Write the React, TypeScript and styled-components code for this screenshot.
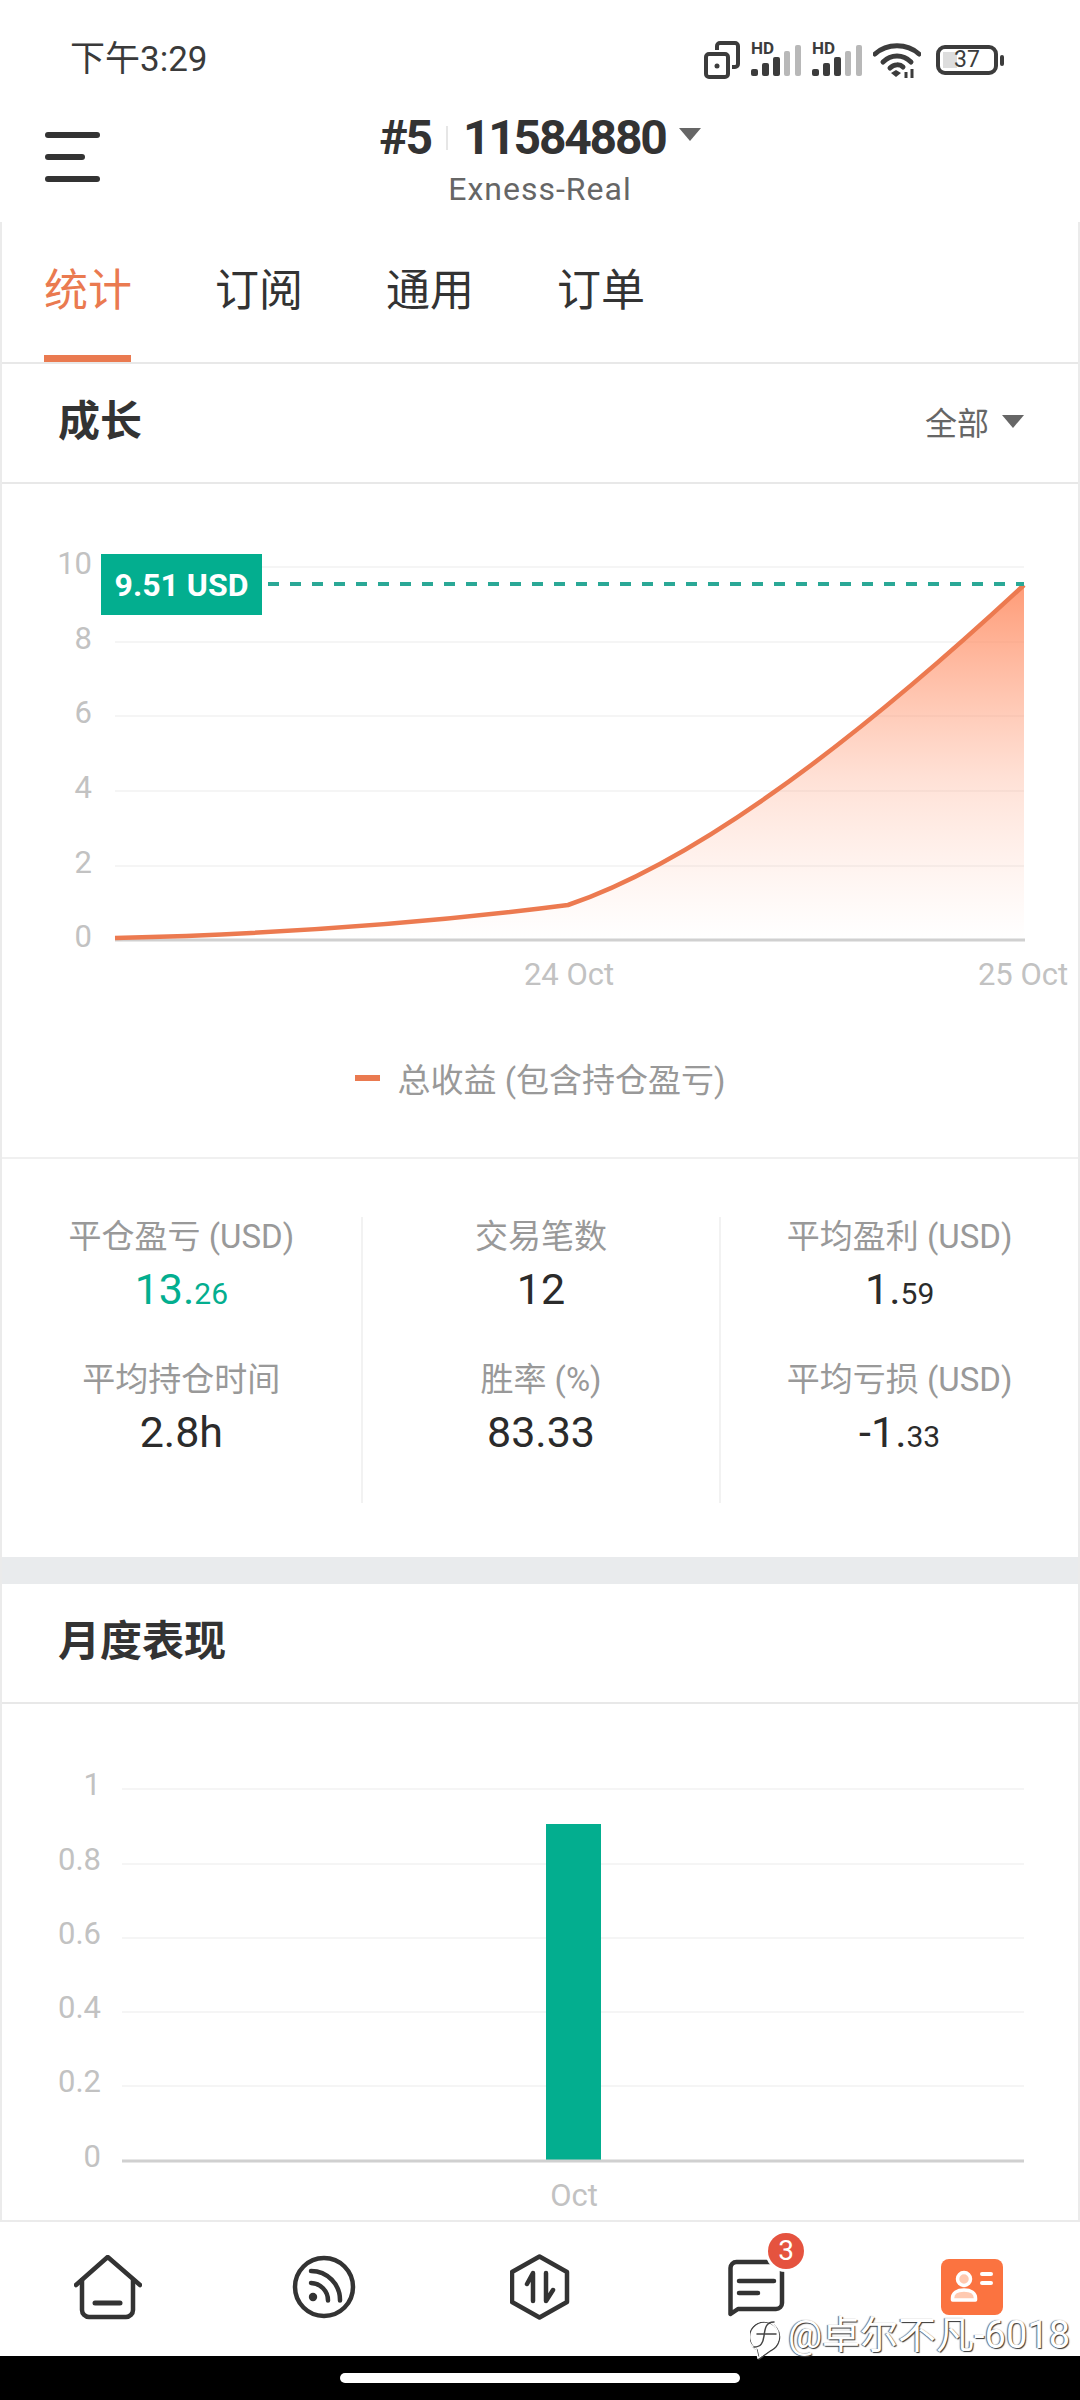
import React from 'react';
import styled, { createGlobalStyle } from 'styled-components';

const GlobalStyle = createGlobalStyle`
  html, body {
    margin: 0;
    padding: 0;
    background: #fff;
  }
  * {
    box-sizing: border-box;
  }
`;

const GREEN = '#03ae8f';
const ORANGE = '#ea7a50';
const FONT = `Roboto, "Noto Sans CJK SC", sans-serif`;

const tabs = ['统计', '订阅', '通用', '订单'];

type Stat = { label: string; value: string; small?: string; green?: boolean };
const stats: Stat[] = [
  { label: '平仓盈亏 (USD)', value: '13.', small: '26', green: true },
  { label: '交易笔数', value: '12' },
  { label: '平均盈利 (USD)', value: '1.', small: '59' },
  { label: '平均持仓时间', value: '2.8h' },
  { label: '胜率 (%)', value: '83.33' },
  { label: '平均亏损 (USD)', value: '-1.', small: '33' },
];

const growthTicks = [
  { label: '10', y: 567 },
  { label: '8', y: 642 },
  { label: '6', y: 716 },
  { label: '4', y: 791 },
  { label: '2', y: 866 },
];

const monthTicks = [
  { label: '1', y: 1789 },
  { label: '0.8', y: 1864 },
  { label: '0.6', y: 1938 },
  { label: '0.4', y: 2012 },
  { label: '0.2', y: 2086 },
];

const linePath = 'M115 938 Q360 932 568 905 Q744 845 1024 585';

const GrowthChart: React.FC = () => (
  <ChartSvg viewBox="2 484 1076 550" width={1076} height={550}>
    <defs>
      <linearGradient id="areaFill" x1="0" y1="585" x2="0" y2="940" gradientUnits="userSpaceOnUse">
        <stop offset="0" stopColor="#ff8a5f" stopOpacity="0.85" />
        <stop offset="0.55" stopColor="#ff9c78" stopOpacity="0.3" />
        <stop offset="1" stopColor="#ffb59a" stopOpacity="0" />
      </linearGradient>
    </defs>
    {growthTicks.map((t) => (
      <g key={t.label}>
        <line x1={115} x2={1024} y1={t.y} y2={t.y} stroke="#f5f5f5" strokeWidth="2" />
        <AxisText x={92} y={t.y + 7} textAnchor="end">{t.label}</AxisText>
      </g>
    ))}
    <AxisText x={92} y={947} textAnchor="end">0</AxisText>
    <path d={`${linePath} L1024 940 L115 940 Z`} fill="url(#areaFill)" />
    <line x1={115} x2={1025} y1={940} y2={940} stroke="#d0d0d0" strokeWidth="3" />
    <path d={linePath} fill="none" stroke="#ec7a50" strokeWidth="4.5" strokeLinejoin="round" />
    <line x1={268} x2={1024} y1={584} y2={584} stroke="#2aa896" strokeWidth="4" strokeDasharray="11 11" />
    <rect x={101} y={554} width={161} height={61} fill={GREEN} />
    <TagText x={181.5} y={596} textAnchor="middle">9.51 USD</TagText>
    <AxisText x={569} y={985} textAnchor="middle">24 Oct</AxisText>
    <AxisText x={1023} y={985} textAnchor="middle">25 Oct</AxisText>
  </ChartSvg>
);

const MonthChart: React.FC = () => (
  <ChartSvg viewBox="2 1704 1076 516" width={1076} height={516}>
    {monthTicks.map((t) => (
      <g key={t.label}>
        <line x1={122} x2={1024} y1={t.y} y2={t.y} stroke="#f5f5f5" strokeWidth="2" />
        <AxisText x={101} y={t.y + 6} textAnchor="end">{t.label}</AxisText>
      </g>
    ))}
    <AxisText x={101} y={2167} textAnchor="end">0</AxisText>
    <rect x={546} y={1824} width={55} height={336} fill={GREEN} />
    <line x1={122} x2={1024} y1={2161} y2={2161} stroke="#d0d0d0" strokeWidth="3" />
    <AxisText x={574} y={2206} textAnchor="middle">Oct</AxisText>
  </ChartSvg>
);

const DualIcon = () => (
  <svg width="36" height="38" viewBox="0 0 36 38" fill="none" stroke="#3c3c3c" strokeWidth="4">
    <rect x="2" y="13" width="22" height="23" rx="3" />
    <path d="M13 9V5a3 3 0 0 1 3-3h15a3 3 0 0 1 3 3v18a3 3 0 0 1-3 3h-3" />
    <circle cx="13" cy="25" r="2.5" fill="#3c3c3c" stroke="none" />
  </svg>
);

const SignalIcon = () => (
  <SignalBox>
    <SignalLabel>HD</SignalLabel>
    <svg width="50" height="32" viewBox="0 0 50 32">
      <rect x="0" y="24" width="7" height="7" rx="2" fill="#3c3c3c" />
      <rect x="11" y="18" width="7" height="13" rx="2" fill="#3c3c3c" />
      <rect x="22" y="12" width="7" height="19" rx="2" fill="#3c3c3c" />
      <rect x="33" y="6" width="6" height="25" rx="2" fill="#b8b8b8" />
      <rect x="44" y="0" width="6" height="31" rx="2" fill="#b8b8b8" />
    </svg>
  </SignalBox>
);

const WifiIcon = () => (
  <svg width="48" height="36" viewBox="0 0 48 36" fill="none" stroke="#3c3c3c" strokeWidth="5" strokeLinecap="round">
    <path d="M2 12C14 1 34 1 46 12" />
    <path d="M10 20C18 12 30 12 38 20" />
    <path d="M17 26C21 22 27 22 30 25" />
    <path d="M23 35l-5-4 5-3 5 3z" fill="#3c3c3c" stroke="none" />
    <path d="M33 36v-6M39 36v-9" strokeWidth="3" strokeLinecap="butt" />
  </svg>
);

const BatteryIcon = () => (
  <BatteryBox>
    <BatteryShell>
      <BatteryLevel />
      <BatteryText>37</BatteryText>
    </BatteryShell>
    <BatteryNub />
  </BatteryBox>
);

const HomeIcon = () => (
  <svg width="68" height="65" viewBox="0 0 68 65" fill="none" stroke="#333" strokeWidth="4.5" strokeLinejoin="round" strokeLinecap="round">
    <path d="M2 30L33.7 2L66 30" />
    <path d="M8 25V55a7 7 0 0 0 7 7H52a7 7 0 0 0 7-7V25" />
    <path d="M21 48H46" strokeWidth="5" />
  </svg>
);

const FeedIcon = () => (
  <svg width="64" height="64" viewBox="0 0 64 64" fill="none" stroke="#333" strokeWidth="4.5" strokeLinecap="round">
    <circle cx="32" cy="32" r="29" />
    <circle cx="21" cy="42" r="4.2" fill="#333" stroke="none" />
    <path d="M19 28A17.5 17.5 0 0 1 36 45.5" />
    <path d="M19 16A29 29 0 0 1 48 45.5" />
  </svg>
);

const TradeIcon = () => (
  <svg width="60" height="66" viewBox="0 0 60 66" fill="none" stroke="#333" strokeWidth="4.5" strokeLinejoin="round" strokeLinecap="round">
    <path d="M29.5 2.5L57 18V48L29.5 63.5L2 48V18Z" />
    <path d="M23 47V19L17 30" />
    <path d="M36 19V47L43 36" />
  </svg>
);

const ChatIcon = () => (
  <svg width="58" height="60" viewBox="0 0 58 60" fill="none" stroke="#333" strokeWidth="4.5" strokeLinejoin="round" strokeLinecap="round">
    <path d="M3.5 57V11a6 6 0 0 1 6-6H49a6 6 0 0 1 6 6V46a6 6 0 0 1-6 6H11Z" />
    <path d="M12 24H47M12 36H31" />
  </svg>
);

const ContactIcon = () => (
  <svg width="62" height="56" viewBox="0 0 62 56">
    <rect width="62" height="56" rx="8" fill="#fb7340" />
    <circle cx="23" cy="20" r="6.5" fill="#ffc9b0" stroke="#fff" strokeWidth="3.5" />
    <path d="M11.5 41V39C11.5 34 16 31 23 31S34.5 34 34.5 39V41Z" fill="#ffc9b0" stroke="#fff" strokeWidth="3.5" strokeLinejoin="round" />
    <path d="M41 15H50M41 24H50" stroke="#fff" strokeWidth="4" strokeLinecap="round" />
  </svg>
);

const WatermarkLogo = () => (
  <WatermarkMark width="36" height="44" viewBox="0 0 36 44" fill="none" strokeLinecap="round">
    <path d="M6 33A15 15 0 1 1 20 33.5L8 42Z" stroke="#444" strokeWidth="1.5" transform="translate(1 1)" />
    <path d="M6 33A15 15 0 1 1 20 33.5L8 42Z" stroke="#fff" strokeWidth="1.5" />
    <path d="M24 6C16 6 15 12 14 20C13 27 11 31 4 31M7 18H26" stroke="#444" strokeWidth="1.5" />
  </WatermarkMark>
);

const App: React.FC = () => (
  <Page>
    <GlobalStyle />
    <StatusBar>
      <StatusTime>下午3:29</StatusTime>
      <StatusIcons>
        <DualIcon />
        <SignalIcon />
        <SignalIcon />
        <WifiIcon />
        <BatteryIcon />
      </StatusIcons>
    </StatusBar>

    <AppHeader>
      <MenuButton>
        <MenuBar />
        <MenuBar $short />
        <MenuBar />
      </MenuButton>
      <HeaderTitle>
        <TitleRow>
          <span>#5</span>
          <TitleSep />
          <span>11584880</span>
          <TitleCaret $size={11} />
        </TitleRow>
        <HeaderSub>Exness-Real</HeaderSub>
      </HeaderTitle>
    </AppHeader>

    <Content>
      <TabRow>
        {tabs.map((tab, i) => (
          <Tab key={tab} $active={i === 0}>{tab}</Tab>
        ))}
      </TabRow>

      <SectionHead>
        <SectionTitle>成长</SectionTitle>
        <RangePicker>
          全部
          <Caret $size={11} />
        </RangePicker>
      </SectionHead>

      <GrowthChart />

      <Legend>
        <LegendDash />
        总收益 (包含持仓盈亏)
      </Legend>

      <StatsPanel>
        <StatsGrid>
          {stats.map((s) => (
            <StatCell key={s.label}>
              <StatLabel>{s.label}</StatLabel>
              <StatValue $green={s.green}>
                {s.value}
                {s.small && <StatSmall>{s.small}</StatSmall>}
              </StatValue>
            </StatCell>
          ))}
        </StatsGrid>
      </StatsPanel>

      <Band />

      <SectionHead>
        <SectionTitle>月度表现</SectionTitle>
      </SectionHead>

      <MonthChart />
    </Content>

    <TabBar>
      <TabBarItem><HomeIcon /></TabBarItem>
      <TabBarItem><FeedIcon /></TabBarItem>
      <TabBarItem><TradeIcon /></TabBarItem>
      <TabBarItem>
        <ChatIcon />
        <Badge>3</Badge>
      </TabBarItem>
      <TabBarItem><ContactIcon /></TabBarItem>
      <Watermark>
        <WatermarkLogo />
        @卓尔不凡-6018
      </Watermark>
    </TabBar>

    <NavBar>
      <HomeIndicator />
    </NavBar>
  </Page>
);

const Page = styled.div`
  width: 1080px;
  height: 2400px;
  display: flex;
  flex-direction: column;
  overflow: hidden;
  background: #fff;
  font-family: ${FONT};
  color: #333;
`;

const StatusBar = styled.div`
  height: 90px;
  padding: 30px 76px 0 70px;
  display: flex;
  justify-content: space-between;
  align-items: flex-start;
`;

const StatusTime = styled.div`
  font-size: 35px;
  line-height: 60px;
  color: #3a3a3a;
`;

const StatusIcons = styled.div`
  display: flex;
  align-items: center;
  gap: 11px;
  height: 60px;
`;

const SignalBox = styled.div`
  position: relative;
  width: 50px;
  height: 34px;
  display: flex;
  align-items: flex-end;
`;

const SignalLabel = styled.span`
  position: absolute;
  left: 0;
  top: -2px;
  font-size: 17px;
  font-weight: 700;
  line-height: 15px;
  color: #3c3c3c;
`;

const BatteryBox = styled.div`
  display: flex;
  align-items: center;
  gap: 2px;
  margin-left: 4px;
`;

const BatteryShell = styled.div`
  position: relative;
  width: 62px;
  height: 30px;
  border: 4px solid #3c3c3c;
  border-radius: 9px;
  display: flex;
  align-items: center;
  justify-content: center;
`;

const BatteryLevel = styled.div`
  position: absolute;
  left: 3px;
  top: 3px;
  bottom: 3px;
  width: 14px;
  background: #ddd;
`;

const BatteryText = styled.span`
  position: relative;
  font-size: 23px;
  line-height: 22px;
  color: #3c3c3c;
`;

const BatteryNub = styled.div`
  width: 4px;
  height: 11px;
  background: #3c3c3c;
  border-radius: 2px;
`;

const AppHeader = styled.div`
  position: relative;
  height: 132px;
  display: flex;
  justify-content: center;
`;

const MenuButton = styled.div`
  position: absolute;
  left: 45px;
  top: 42px;
  width: 56px;
  display: flex;
  flex-direction: column;
  gap: 16px;
`;

const MenuBar = styled.div<{ $short?: boolean }>`
  height: 6px;
  width: ${({ $short }) => ($short ? '40px' : '55px')};
  border-radius: 3px;
  background: #333;
`;

const HeaderTitle = styled.div`
  display: flex;
  flex-direction: column;
  align-items: center;
  padding-top: 21px;
`;

const TitleRow = styled.div`
  display: flex;
  align-items: center;
  gap: 15px;
  font-size: 48px;
  line-height: 54px;
  font-weight: 700;
  letter-spacing: -2.2px;
  color: #333;
`;

const TitleSep = styled.div`
  width: 2px;
  height: 24px;
  background: #e6e6e6;
`;

const Caret = styled.span<{ $size: number }>`
  display: inline-block;
  width: 0;
  height: 0;
  border-left: ${({ $size }) => $size}px solid transparent;
  border-right: ${({ $size }) => $size}px solid transparent;
  border-top: ${({ $size }) => $size + 2}px solid #666;
`;

const TitleCaret = styled(Caret)`
  margin-left: -2px;
  margin-top: -8px;
`;

const HeaderSub = styled.div`
  font-size: 32px;
  line-height: 36px;
  margin-top: 6px;
  letter-spacing: 1px;
  color: #666;
`;

const Content = styled.div`
  flex: 1;
  min-height: 0;
  display: flex;
  flex-direction: column;
  border-left: 2px solid #ebebeb;
  border-right: 2px solid #ebebeb;
  border-bottom: 2px solid #ebebeb;
`;

const TabRow = styled.div`
  height: 142px;
  flex-shrink: 0;
  padding-left: 42px;
  display: flex;
  gap: 86px;
  border-bottom: 2px solid #e8e8e8;
`;

const Tab = styled.div<{ $active?: boolean }>`
  position: relative;
  width: 85px;
  font-size: 44px;
  line-height: 138px;
  white-space: nowrap;
  color: ${({ $active }) => ($active ? ORANGE : '#333')};

  ${({ $active }) =>
    $active &&
    `
    &::after {
      content: '';
      position: absolute;
      left: 0;
      right: -2px;
      bottom: 0;
      height: 7px;
      background: ${ORANGE};
    }
  `}
`;

const SectionHead = styled.div`
  height: 120px;
  flex-shrink: 0;
  padding: 0 54px 12px 56px;
  display: flex;
  align-items: center;
  justify-content: space-between;
  border-bottom: 2px solid #e8e8e8;
`;

const SectionTitle = styled.div`
  font-size: 42px;
  font-weight: 700;
  color: #333;
`;

const RangePicker = styled.div`
  display: flex;
  align-items: center;
  gap: 13px;
  margin-top: 8px;
  font-size: 32px;
  color: #666;
`;

const ChartSvg = styled.svg`
  display: block;
  flex-shrink: 0;
`;

const AxisText = styled.text`
  font-family: ${FONT};
  font-size: 31px;
  fill: #c2c2c2;
`;

const TagText = styled.text`
  font-family: ${FONT};
  font-size: 32px;
  font-weight: 700;
  fill: #fff;
`;

const Legend = styled.div`
  height: 125px;
  flex-shrink: 0;
  padding-bottom: 36px;
  display: flex;
  align-items: center;
  justify-content: center;
  gap: 18px;
  font-size: 33px;
  color: #999;
  border-bottom: 2px solid #f0f0f0;
`;

const LegendDash = styled.div`
  width: 25px;
  height: 6px;
  background: ${ORANGE};
`;

const StatsPanel = styled.div`
  height: 398px;
  flex-shrink: 0;
  padding-top: 58px;
`;

const StatsGrid = styled.div`
  display: grid;
  grid-template-columns: repeat(3, 1fr);
  grid-auto-rows: 143px;
`;

const StatCell = styled.div`
  display: flex;
  flex-direction: column;
  align-items: center;
  border-left: 2px solid #f2f2f2;

  &:nth-child(3n + 1) {
    border-left: none;
  }
`;

const StatLabel = styled.div`
  font-size: 33px;
  line-height: 40px;
  white-space: nowrap;
  color: #999;
`;

const StatValue = styled.div<{ $green?: boolean }>`
  font-size: 43px;
  line-height: 54px;
  margin-top: 5px;
  color: ${({ $green }) => ($green ? GREEN : '#2b2b2b')};
`;

const StatSmall = styled.span`
  font-size: 30px;
`;

const Band = styled.div`
  height: 27px;
  flex-shrink: 0;
  background: #e9ebed;
`;

const TabBar = styled.div`
  position: relative;
  z-index: 1;
  height: 134px;
  flex-shrink: 0;
  padding-top: 31px;
  display: grid;
  grid-template-columns: repeat(5, 216px);
  grid-auto-rows: 68px;
  align-items: center;
  justify-items: center;
`;

const TabBarItem = styled.div`
  position: relative;
  display: flex;
`;

const Badge = styled.div`
  position: absolute;
  left: 41px;
  top: -24px;
  width: 36px;
  height: 36px;
  border-radius: 50%;
  background: #e5533f;
  box-shadow: 0 0 0 3px #fff;
  color: #fff;
  font-size: 28px;
  line-height: 36px;
  text-align: center;
`;

const Watermark = styled.div`
  position: absolute;
  right: 10px;
  bottom: -4px;
  display: flex;
  align-items: center;
  gap: 2px;
  font-size: 38px;
  line-height: 44px;
  color: #fff;
  text-shadow: 1px 1px 1px #333, -1px 0 1px #666;
  white-space: nowrap;
`;

const WatermarkMark = styled.svg`
  display: block;
  flex-shrink: 0;
  margin-top: 6px;
`;

const NavBar = styled.div`
  height: 44px;
  flex-shrink: 0;
  background: #000;
  display: flex;
  justify-content: center;
  padding-top: 17px;
`;

const HomeIndicator = styled.div`
  width: 400px;
  height: 10px;
  border-radius: 5px;
  background: #fff;
`;

export default App;
